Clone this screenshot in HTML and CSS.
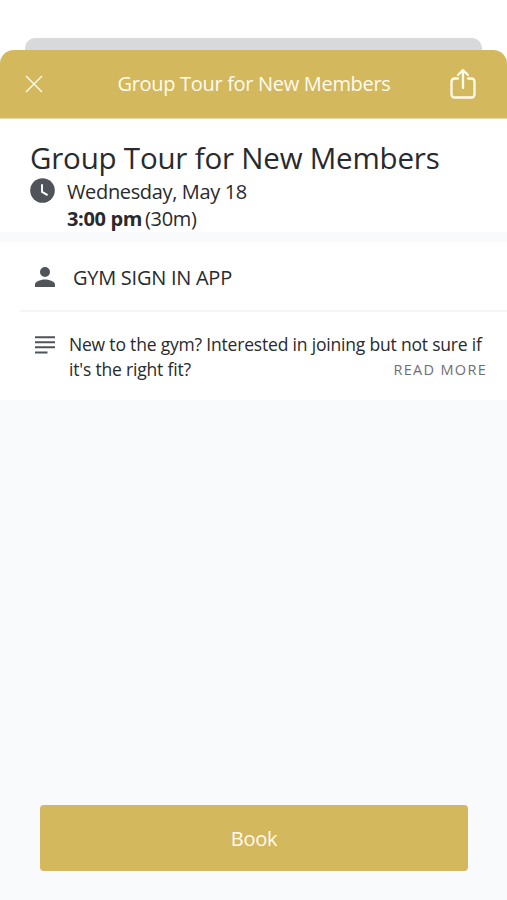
FILE: index.html
```html
<!DOCTYPE html>
<html lang="en">
<head>
    <meta charset="UTF-8">
    <meta name="viewport" content="width=device-width, initial-scale=1.0">
    <title>Group Tour for New Members</title>
    <link rel="stylesheet" href="styles.css">
</head>
<body>

<div class="back-card"></div>
<div class="sheet">
    <header class="header">
        <svg class="icon-close" viewBox="0 0 18 18"><path d="M1 1l16 16M17 1L1 17"/></svg>
        <span class="header-title">Group Tour for New Members</span>
        <svg class="icon-share" viewBox="0 0 26 32"><path d="M8 10.500H4.500a3 3 0 0 0-3 3V26.500a3 3 0 0 0 3 3h17a3 3 0 0 0 3-3V13.500a3 3 0 0 0-3-3H18M13 20V2.500M8 7L13 2.200 18 7"/></svg>
    </header>

    <section class="summary">
        <h1 class="title">Group Tour for New Members</h1>
        <div class="when">
            <svg class="icon-clock" viewBox="0 0 26 26"><circle cx="13" cy="13" r="12.800"/><path d="M12.500 6.500v8l5.800 3.300"/></svg>
            <div>
                <p class="date">Wednesday, May 18</p>
                <p class="time"><strong>3:00 pm</strong><span class="duration">(30m)</span></p>
            </div>
        </div>
    </section>

    <section class="details">
        <div class="row">
            <svg class="icon-person" viewBox="4 4 16 16"><path d="M12 12a4 4 0 1 0 0-8 4 4 0 0 0 0 8zm0 2c-2.670 0-8 1.340-8 4v2h16v-2c0-2.660-5.330-4-8-4z"/></svg>
            <span class="host">GYM SIGN IN APP</span>
        </div>
        <div class="row description">
            <svg class="icon-text" viewBox="0 0 20 18"><path d="M0 1.200h20M0 6.200h20M0 11.300h20M0 16.500h12.500"/></svg>
            <div class="description-body">
                <p>New to the gym? Interested in joining but not sure if</p>
                <div class="last-line">
                    <p>it's the right fit?</p>
                    <a class="read-more">READ MORE</a>
                </div>
            </div>
        </div>
    </section>

    <footer class="footer">
        <button class="book">Book</button>
    </footer>
</div>

</body>
</html>
```

FILE: styles.css
```css
* {
    box-sizing: border-box;
}
body {
    margin: 0;
    height: 900px;
    padding-top: 38px;
    overflow: hidden;
    display: flex;
    flex-direction: column;
    font-family: "Open Sans", sans-serif;
    color: #292a2d;
    background: #fff;
}
h1, p {
    margin: 0;
    font-weight: normal;
    white-space: nowrap;
}
svg {
    display: block;
    flex-shrink: 0;
    fill: none;
}
.back-card {
    height: 12px;
    margin: 0 25px;
    background: #d8d9da;
    border-radius: 10px 10px 0 0;
}
.sheet {
    flex: 1;
    display: flex;
    flex-direction: column;
    background: #f8fafc;
    border-radius: 14px 14px 0 0;
    overflow: hidden;
}
.header {
    height: 69px;
    padding: 0 31px 0 25px;
    display: flex;
    align-items: center;
    background: #d3b85d;
    border-bottom: 1px solid #e7d9a9;
}
.header-title {
    flex: 1;
    padding: 0 0 1px 15px;
    font-size: 20px;
    letter-spacing: -0.31px;
    text-align: center;
    color: #fffbee;
    white-space: nowrap;
}
.icon-close {
    width: 18px;
    height: 18px;
    stroke: #fffbee;
    stroke-width: 1.4;
}
.icon-share {
    width: 26px;
    height: 32px;
    stroke: #fffbee;
    stroke-width: 2.3;
    stroke-linecap: round;
    stroke-linejoin: round;
}
.summary {
    height: 113px;
    padding: 19px 30px 0;
    background: #fff;
}
.title {
    font-size: 29.5px;
    line-height: 40px;
    letter-spacing: -0.2px;
}
.when {
    display: flex;
    gap: 12px;
    font-size: 20px;
    line-height: 27px;
    letter-spacing: -0.35px;
}
.icon-clock {
    width: 25px;
    height: 25px;
}
.icon-clock circle {
    fill: #50535a;
}
.icon-clock path {
    stroke: #fff;
    stroke-width: 2;
}
.duration {
    margin-left: 3px;
}
.details {
    margin-top: 10px;
    background: #fff;
}
.row {
    height: 68px;
    padding: 2px 0 0 35px;
    display: flex;
    align-items: center;
}
.icon-person {
    width: 20px;
    height: 20px;
    fill: #50535a;
}
.host {
    margin-left: 18px;
    font-size: 20px;
    letter-spacing: -0.26px;
}
.description {
    height: 90px;
    margin-left: 20px;
    padding: 20px 20px 0 15px;
    align-items: flex-start;
    border-top: 2px solid #f5f5f6;
}
.icon-text {
    width: 20px;
    height: 18px;
    margin-top: 4px;
    stroke: #50535a;
    stroke-width: 2;
}
.description-body {
    flex: 1;
    margin-left: 14px;
    font-size: 17.5px;
    line-height: 25px;
    letter-spacing: -0.19px;
}
.last-line {
    display: flex;
    justify-content: space-between;
}
.read-more {
    font-size: 14.5px;
    line-height: 25px;
    letter-spacing: 1.3px;
    color: #6e7075;
}
.footer {
    margin-top: auto;
    padding: 0 39px 29px 40px;
}
.book {
    display: block;
    width: 100%;
    height: 66px;
    border: none;
    border-radius: 4px;
    font-family: inherit;
    font-size: 20px;
    letter-spacing: -0.3px;
    color: #fffbee;
    background: #d3b85d;
}
```
